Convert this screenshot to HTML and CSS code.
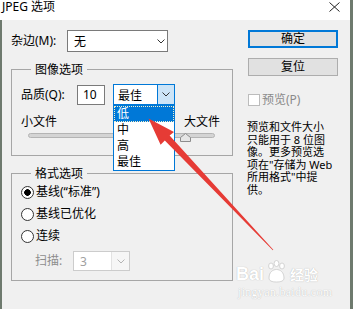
FILE: index.html
```html
<!DOCTYPE html>
<html lang="zh-CN">
<head>
  <meta charset="utf-8">
  <title>JPEG 选项</title>
  <link rel="stylesheet" href="styles.css">
</head>
<body>
  <div class="dialog">
    <div class="titlebar">
      <span class="title">JPEG 选项</span>
      <svg class="close" width="11" height="10" viewBox="0 0 11 10">
        <path d="M0.5 0.5 L10.5 9.5 M10.5 0.5 L0.5 9.5" stroke="#222" stroke-width="1" fill="none"/>
      </svg>
    </div>

    <div class="content">
      <div class="main">
        <div class="row matte">
          <label class="lbl">杂边(M):</label>
          <div class="combo wide">
            <span class="value">无</span>
            <svg class="chev" width="8" height="5" viewBox="0 0 8 5"><polyline points="0.5,0.5 4,4 7.5,0.5" fill="none" stroke="#333" stroke-width="1"/></svg>
          </div>
        </div>

        <fieldset class="group">
          <legend>图像选项</legend>
          <div class="row quality">
            <label class="lbl">品质(Q):</label>
            <div class="textbox">10</div>
            <div class="combo open">
              <span class="value">最佳</span>
              <span class="drop-btn">
                <svg width="8" height="5" viewBox="0 0 8 5"><polyline points="0.5,0.5 4,4 7.5,0.5" fill="none" stroke="#333" stroke-width="1"/></svg>
              </span>
              <ul class="droplist">
                <li class="selected">低</li>
                <li>中</li>
                <li>高</li>
                <li>最佳</li>
              </ul>
            </div>
          </div>
          <div class="row size-labels">
            <span>小文件</span>
            <span>大文件</span>
          </div>
          <div class="slider">
            <div class="track"></div>
            <svg class="thumb" width="11" height="9" viewBox="0 0 11 9">
              <polygon points="5.5,0.5 10.5,4.5 10.5,8.5 0.5,8.5 0.5,4.5" fill="#e6e6e6" stroke="#8c8c8c" stroke-width="1"/>
            </svg>
          </div>
        </fieldset>

        <fieldset class="group format">
          <legend>格式选项</legend>
          <div class="radio"><span class="dot checked"></span>基线(“标准”)</div>
          <div class="radio"><span class="dot"></span>基线已优化</div>
          <div class="radio"><span class="dot"></span>连续</div>
          <div class="row scans">
            <span class="lbl disabled">扫描:</span>
            <div class="combo small disabled">
              <span class="value">3</span>
              <span class="drop-btn">
                <svg width="8" height="5" viewBox="0 0 8 5"><polyline points="0.5,0.5 4,4 7.5,0.5" fill="none" stroke="#b4b4b4" stroke-width="1"/></svg>
              </span>
            </div>
          </div>
        </fieldset>
      </div>

      <div class="side">
        <button class="btn default">确定</button>
        <button class="btn">复位</button>
        <label class="check disabled"><span class="box"></span>预览(P)</label>
        <p class="note">预览和文件大小<br>只能用于 8 位图<br>像。更多预览选<br>项在"存储为 Web<br>所用格式"中提<br>供。</p>
      </div>
    </div>

    <svg class="arrow" width="353" height="309" viewBox="0 0 353 309">
      <polygon points="148.5,118.5 174,132 169.6,135.6 273.3,249.8 272.8,250.3 164.8,140.6 160.6,144.8" fill="#e63b35"/>
    </svg>

    <div class="watermark">
      <div class="wm-top">
        <span class="wm-bai">Bai</span>
        <svg class="paw" width="24" height="24" viewBox="0 0 24 24">
          <g fill="#fff" stroke="#c9c9c9" stroke-width="0.8">
            <ellipse cx="7" cy="7" rx="2.4" ry="3"/>
            <ellipse cx="12.5" cy="4.5" rx="2.4" ry="3"/>
            <ellipse cx="18" cy="7" rx="2.4" ry="3"/>
            <path d="M5 19 C5 13 9 10.5 12.5 10.5 C16 10.5 20 13 20 19 C20 22 17 23 12.5 23 C8 23 5 22 5 19 Z"/>
          </g>
        </svg>
        <span class="wm-jy">经验</span>
      </div>
      <div class="wm-url">jingyan.baidu.com</div>
    </div>
  </div>
</body>
</html>
```

FILE: styles.css
```css
* {
  box-sizing: border-box;
}

body {
  margin: 0;
  font-family: "Noto Sans", "Noto Sans CJK SC", sans-serif;
  font-size: 12px;
  color: #000;
  background: #f0f0f0;
}

.dialog {
  position: relative;
  width: 353px;
  height: 309px;
  overflow: hidden;
  background: #f0f0f0;
  border-right: 3px solid #6e7a6e;
}

.titlebar {
  height: 20px;
  background: #fff;
  display: flex;
  justify-content: space-between;
  align-items: flex-start;
  padding: 0 10px 0 2px;
}

.title {
  line-height: 13px;
}

.close {
  margin-top: 2px;
}

.content {
  display: flex;
  height: 289px;
  border-left: 2px solid #6e7a6e;
  padding: 10px 0 0 9px;
}

.main {
  width: 222px;
}

.side {
  width: 90px;
  margin-left: 15px;
}

.row {
  display: flex;
  align-items: center;
}

.lbl {
  width: 56px;
  line-height: 16px;
}

.lbl.disabled {
  width: 38px;
  margin-left: 14px;
  color: #8d8d8d;
}

/* combo boxes */
.combo {
  position: relative;
  display: flex;
  align-items: center;
  background: #fff;
  border: 1px solid #7a7a7a;
}

.combo.wide {
  width: 101px;
  height: 22px;
  padding-left: 6px;
}

.combo.wide .chev {
  margin-left: auto;
  margin-right: 2px;
}

.combo.open {
  width: 62px;
  height: 21px;
  border-color: #0078d7;
  padding-left: 4px;
}

.drop-btn {
  margin-left: auto;
  width: 17px;
  height: 100%;
  display: flex;
  align-items: center;
  justify-content: center;
}

.combo.open .drop-btn {
  background: #cce4f7;
  border-left: 1px solid #0078d7;
}

.combo.small {
  width: 57px;
  height: 20px;
  padding-left: 6px;
  border-color: #cccccc;
  color: #a0a0a0;
}

.combo.small .drop-btn {
  width: 18px;
  background: #f6f6f6;
  border-left: 1px solid #e2e2e2;
}

.droplist {
  position: absolute;
  left: -1px;
  top: calc(100% + 1px);
  width: 62px;
  margin: 0;
  padding: 0;
  list-style: none;
  background: #fff;
  border: 1px solid #0078d7;
  z-index: 2;
}

.droplist li {
  height: 16px;
  line-height: 16px;
  padding-left: 3px;
}

.droplist li.selected {
  background: #0078d7;
  color: #fff;
  outline: 1px dotted #f3f0c8;
  outline-offset: -1px;
}

.textbox {
  width: 28px;
  height: 20px;
  margin-right: 8px;
  padding-left: 5px;
  line-height: 18px;
  background: #fff;
  border: 1px solid #7a7a7a;
}

/* group boxes */
.group {
  margin: 9px 0 0;
  padding: 0 12px 10px 9px;
  border: 1px solid #a6a6a6;
  min-width: 0;
}

.group legend {
  margin-left: 10px;
  padding: 0 4px;
  line-height: 17px;
}

.quality {
  margin-top: 6px;
  height: 21px;
}

.size-labels {
  margin-top: 9px;
  height: 16px;
  line-height: 16px;
  justify-content: space-between;
}

.slider {
  position: relative;
  height: 12px;
  margin: 0 5px 0 7px;
}

.track {
  margin-top: 3px;
  height: 5px;
  background: #d4d4d4;
  border: 1px solid #b4b4b4;
  border-radius: 3px;
}

.thumb {
  position: absolute;
  left: 152px;
  top: 0;
}

.format {
  padding-bottom: 9px;
}

.radio {
  display: flex;
  align-items: center;
  height: 20px;
  margin-top: 2px;
  line-height: 16px;
}

.format legend + .radio {
  margin-top: 0;
}

.dot {
  width: 13px;
  height: 13px;
  margin-right: 2px;
  border: 1px solid #333;
  border-radius: 50%;
  background: #fff;
}

.dot.checked {
  background: radial-gradient(circle, #000 0 3px, #fff 3.6px);
}

.scans {
  margin-top: 5px;
  height: 20px;
}

/* right column */
.btn {
  display: block;
  width: 90px;
  height: 18px;
  padding: 0;
  font: inherit;
  line-height: 14px;
  color: #000;
  background: #e1e1e1;
  border: 1px solid #adadad;
}

.btn.default {
  border: 2px solid #0078d7;
}

.btn + .btn {
  margin-top: 10px;
}

.check {
  display: flex;
  align-items: center;
  height: 13px;
  margin-top: 17px;
  line-height: 13px;
}

.check.disabled {
  color: #8a8a8a;
}

.check .box {
  width: 12px;
  height: 12px;
  margin-right: 2px;
  background: #fff;
  border: 1px solid #bcbcbc;
}

.note {
  margin: 15px 0 0 -1px;
  font-size: 11px;
  line-height: 12.5px;
}

/* overlays */
.arrow {
  position: absolute;
  left: 0;
  top: 0;
  z-index: 3;
  pointer-events: none;
}

.watermark {
  position: absolute;
  left: 236px;
  top: 257px;
  color: #fff;
  text-shadow: 0 0 1px rgba(0, 0, 0, 0.3);
}

.wm-top {
  display: flex;
  align-items: flex-end;
  height: 26px;
}

.wm-bai {
  font-family: "Liberation Sans", sans-serif;
  font-weight: bold;
  font-size: 18px;
  line-height: 18px;
}

.wm-jy {
  font-size: 14px;
  font-weight: bold;
  line-height: 16px;
  margin-left: 2px;
}

.wm-url {
  margin: 3px 0 0 2px;
  font-family: "Liberation Serif", serif;
  font-size: 12px;
  line-height: 12px;
  letter-spacing: 0.3px;
}
```
